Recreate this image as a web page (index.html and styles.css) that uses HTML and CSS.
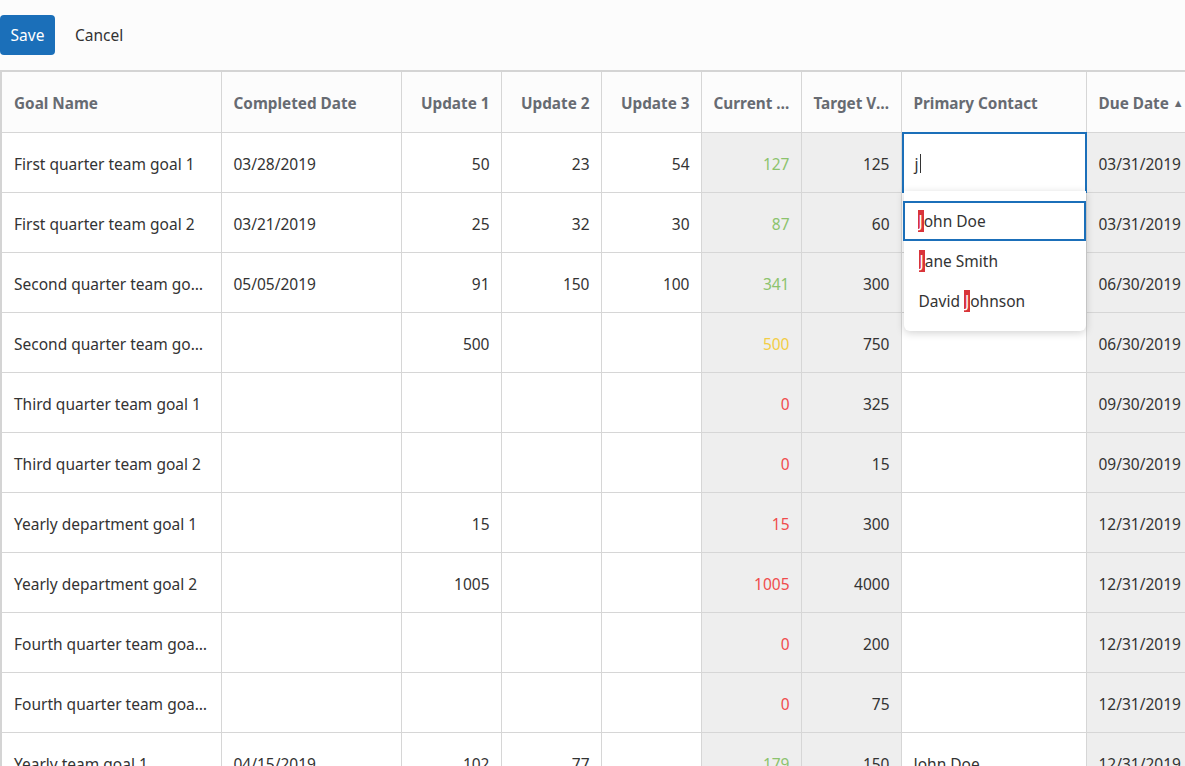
FILE: index.html
```html
<!DOCTYPE html>
<html>
<head>
<meta charset="utf-8">
<link rel="stylesheet" href="styles.css">
</head>
<body>
<div class="toolbar">
  <button class="btn btn-primary">Save</button>
  <button class="btn btn-link">Cancel</button>
</div>
<table class="grid">
  <colgroup>
    <col class="c-name"><col class="c-date"><col class="c-num"><col class="c-num"><col class="c-num"><col class="c-num"><col class="c-num"><col class="c-contact"><col class="c-due">
  </colgroup>
  <thead>
    <tr>
      <th>Goal Name</th>
      <th>Completed Date</th>
      <th class="r">Update 1</th>
      <th class="r">Update 2</th>
      <th class="r">Update 3</th>
      <th class="r">Current Value</th>
      <th class="r">Target Value</th>
      <th>Primary Contact</th>
      <th>Due Date <span class="sort">&#9650;</span></th>
    </tr>
  </thead>
  <tbody>
    <tr>
      <td>First quarter team goal 1</td><td>03/28/2019</td><td class="r">50</td><td class="r">23</td><td class="r">54</td><td class="r ro green">127</td><td class="r ro">125</td>
      <td class="editing">
        <div class="editor"><span class="typed">j</span><span class="caret"></span></div>
        <div class="dropdown">
          <div class="opt active"><span class="hl">J</span>ohn Doe</div>
          <div class="opt"><span class="hl">J</span>ane Smith</div>
          <div class="opt">David&nbsp;<span class="hl">J</span>ohnson</div>
        </div>
      </td>
      <td class="ro">03/31/2019</td>
    </tr>
    <tr><td>First quarter team goal 2</td><td>03/21/2019</td><td class="r">25</td><td class="r">32</td><td class="r">30</td><td class="r ro green">87</td><td class="r ro">60</td><td></td><td class="ro">03/31/2019</td></tr>
    <tr><td>Second quarter team goal 1</td><td>05/05/2019</td><td class="r">91</td><td class="r">150</td><td class="r">100</td><td class="r ro green">341</td><td class="r ro">300</td><td></td><td class="ro">06/30/2019</td></tr>
    <tr><td>Second quarter team goal 2</td><td></td><td class="r">500</td><td class="r"></td><td class="r"></td><td class="r ro yellow">500</td><td class="r ro">750</td><td></td><td class="ro">06/30/2019</td></tr>
    <tr><td>Third quarter team goal 1</td><td></td><td class="r"></td><td class="r"></td><td class="r"></td><td class="r ro red">0</td><td class="r ro">325</td><td></td><td class="ro">09/30/2019</td></tr>
    <tr><td>Third quarter team goal 2</td><td></td><td class="r"></td><td class="r"></td><td class="r"></td><td class="r ro red">0</td><td class="r ro">15</td><td></td><td class="ro">09/30/2019</td></tr>
    <tr><td>Yearly department goal 1</td><td></td><td class="r">15</td><td class="r"></td><td class="r"></td><td class="r ro red">15</td><td class="r ro">300</td><td></td><td class="ro">12/31/2019</td></tr>
    <tr><td>Yearly department goal 2</td><td></td><td class="r">1005</td><td class="r"></td><td class="r"></td><td class="r ro red">1005</td><td class="r ro">4000</td><td></td><td class="ro">12/31/2019</td></tr>
    <tr><td>Fourth quarter team goal 1</td><td></td><td class="r"></td><td class="r"></td><td class="r"></td><td class="r ro red">0</td><td class="r ro">200</td><td></td><td class="ro">12/31/2019</td></tr>
    <tr><td>Fourth quarter team goal 2</td><td></td><td class="r"></td><td class="r"></td><td class="r"></td><td class="r ro red">0</td><td class="r ro">75</td><td></td><td class="ro">12/31/2019</td></tr>
    <tr><td>Yearly team goal 1</td><td>04/15/2019</td><td class="r">102</td><td class="r">77</td><td class="r"></td><td class="r ro green">179</td><td class="r ro">150</td><td>John Doe</td><td class="ro">12/31/2019</td></tr>
  </tbody>
</table>
</body>
</html>
```
FILE: styles.css
```css
html, body {
  margin: 0;
  padding: 0;
  background: #fcfcfc;
  overflow: hidden;
  height: 766px;
  width: 1185px;
}
body {
  font-family: "Noto Sans", "Open Sans", sans-serif;
  font-size: 15.5px;
  color: #333;
}
.toolbar {
  display: flex;
  align-items: center;
  gap: 10px;
  padding: 15px 0;
  height: 40px;
}
.btn {
  font-family: inherit;
  font-size: 15.5px;
  height: 40px;
  border: none;
  border-radius: 4px;
  padding: 0 10px;
  cursor: pointer;
}
.btn-primary {
  background: #1b6fb9;
  color: #fff;
  width: 55px;
}
.btn-link {
  background: transparent;
  color: #333;
}
.grid {
  border-collapse: collapse;
  table-layout: fixed;
  width: 1246px;
  border-top: 2px solid #d4d4d4;
  border-left: 2px solid #d4d4d4;
}
.c-name { width: 220px; }
.c-date { width: 180px; }
.c-num { width: 100px; }
.c-contact { width: 185px; }
.c-due { width: 161px; }
.grid th, .grid td {
  border-right: 1px solid #d6d6d6;
  border-bottom: 1px solid #d6d6d6;
  padding: 2px 11px 0 12px;
  white-space: nowrap;
  overflow: hidden;
  text-overflow: ellipsis;
  text-align: left;
}
.grid th {
  height: 58px;
  font-weight: 700;
  color: #676b72;
  background: #fcfcfc;
  font-size: 15.3px;
}
.grid td {
  height: 57px;
  background: #fff;
}
.grid .r { text-align: right; }
.grid td.ro { background: #eeeeee; }
.green { color: #8cc36d; }
.yellow { color: #f3cd45; }
.red { color: #f04c4c; }
.sort {
  font-size: 11px;
  vertical-align: 2px;
}
.grid td.editing {
  position: relative;
  overflow: visible;
  padding: 0;
}
.editor {
  position: absolute;
  left: 0;
  top: -1px;
  right: -1px;
  bottom: -1px;
  border: 2px solid #1b6fb9;
  background: #fff;
  display: flex;
  align-items: center;
  padding: 2px 0 0 11px;
  z-index: 2;
}
.caret {
  display: inline-block;
  width: 1px;
  height: 19px;
  background: #333;
  margin-left: 1px;
}
.dropdown {
  position: absolute;
  left: 2px;
  top: 58px;
  width: 182px;
  background: #fff;
  border-radius: 0 0 6px 6px;
  box-shadow: 0 2px 8px rgba(0,0,0,0.18);
  padding: 10px 0;
  z-index: 3;
}
.opt {
  height: 40px;
  display: flex;
  align-items: center;
  padding-left: 15px;
  box-sizing: border-box;
  color: #333;
}
.opt.active {
  border: 2px solid #1b6fb9;
  padding-left: 13px;
  margin: 0 0 0 -1px;
}
.hl {
  background: #d9343a;
  color: #fff;
  padding: 0 1px;
}
```
